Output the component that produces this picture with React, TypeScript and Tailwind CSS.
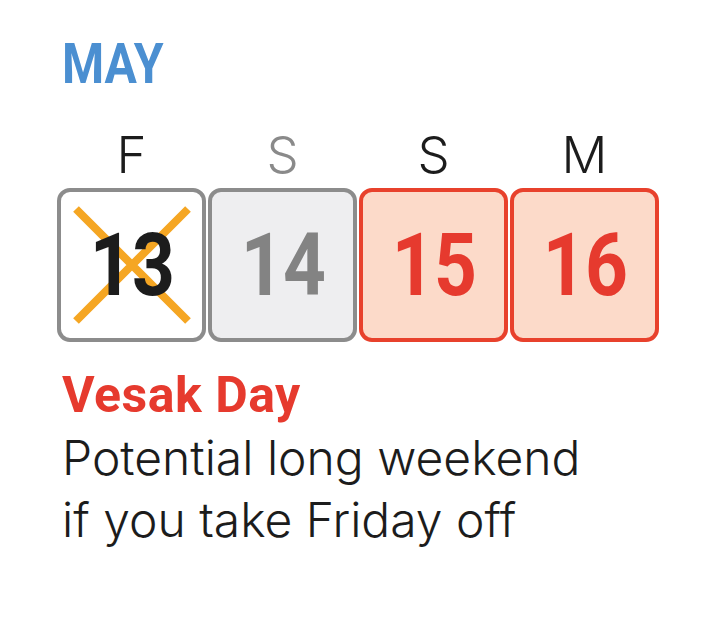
const days = [
  { letter: "F", num: "13", kind: "off" },
  { letter: "S", num: "14", kind: "weekend" },
  { letter: "S", num: "15", kind: "holiday" },
  { letter: "M", num: "16", kind: "holiday" },
];

function Cross() {
  return (
    <svg className="absolute inset-0 m-auto" width="122" height="122" viewBox="0 0 122 122">
      <path d="M5 5 L117 117 M117 5 L5 117" stroke="#f5a623" strokeWidth="8" />
    </svg>
  );
}

function DayBox({ num, kind }: { num: string; kind: string }) {
  const box =
    kind === "holiday"
      ? "border-[#e8412c] bg-[#fcdac9] text-[#e63a2e]"
      : kind === "weekend"
        ? "border-[#8c8c8c] bg-[#eeeef0] text-[#838383]"
        : "border-[#8c8c8c] bg-white text-[#1c1c1c]";
  return (
    <div
      className={`relative flex h-[154px] w-[149px] items-center justify-center rounded-[13px] border-[4px] ${box}`}
    >
      {kind === "off" ? <Cross /> : null}
      <span className="relative inline-block scale-x-[0.86] text-[87px] font-bold leading-none tracking-[-1px]">
        {num}
      </span>
    </div>
  );
}

export default function App() {
  return (
    <div
      className="h-[620px] w-[720px] bg-white pl-[57px] pt-[36px]"
      style={{ fontFamily: "Roboto, 'Liberation Sans', sans-serif" }}
    >
      <h1 className="ml-[5px] inline-block origin-left scale-x-[0.86] text-[56px] font-bold leading-none text-[#4b8fd1]">
        MAY
      </h1>
      <div className="mt-[37px] flex gap-[2px]">
        {days.map((d, i) => (
          <div key={i} className="flex w-[149px] flex-col items-center">
            <span
              className={`font-['Inter',sans-serif] text-[51px] font-light leading-none ${d.kind === "weekend" ? "text-[#8a8a8a]" : "text-[#1c1c1c]"}`}
            >
              {d.letter}
            </span>
            <div className="mt-[8px]">
              <DayBox num={d.num} kind={d.kind} />
            </div>
          </div>
        ))}
      </div>
      <div className="ml-[5px] mt-[28px]">
        <p className="text-[50px] font-bold leading-none tracking-[0.5px] text-[#e63a2e]">Vesak Day</p>
        <p className="mt-[7px] font-['Inter',sans-serif] text-[48px] font-light leading-[62px] text-[#1c1c1c]">
          Potential long weekend
          <br />
          if you take Friday off
        </p>
      </div>
    </div>
  );
}
